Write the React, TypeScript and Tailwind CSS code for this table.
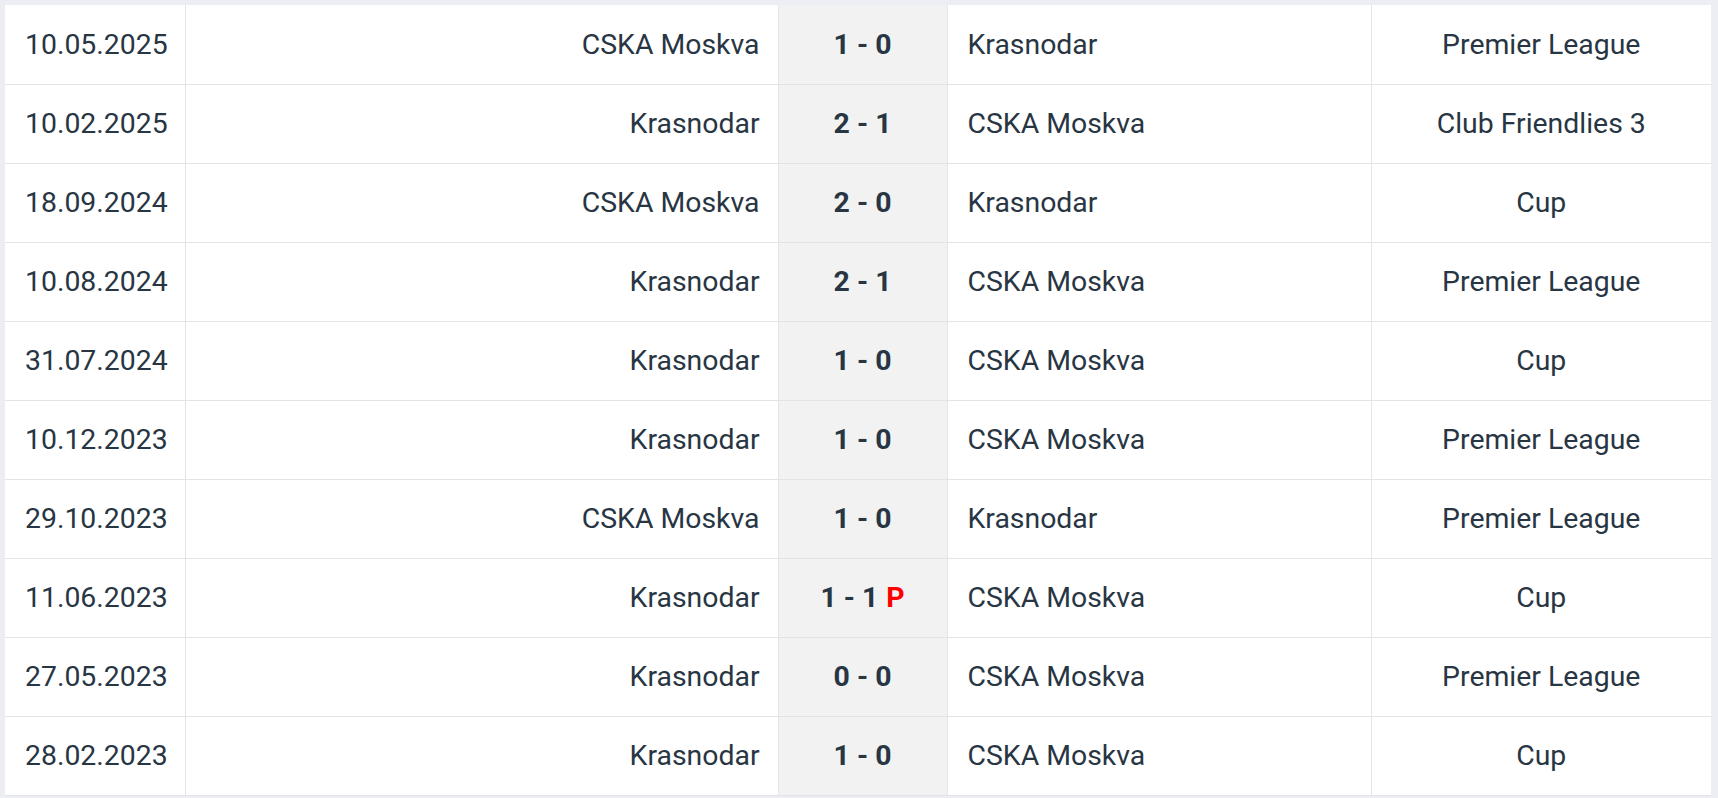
/* Head-to-head results table */

type Match = {
  date: string
  home: string
  score: string
  pen?: boolean
  away: string
  comp: string
}

const matches: Match[] = [
  { date: '10.05.2025', home: 'CSKA Moskva', score: '1 - 0', away: 'Krasnodar',   comp: 'Premier League' },
  { date: '10.02.2025', home: 'Krasnodar',   score: '2 - 1', away: 'CSKA Moskva', comp: 'Club Friendlies 3' },
  { date: '18.09.2024', home: 'CSKA Moskva', score: '2 - 0', away: 'Krasnodar',   comp: 'Cup' },
  { date: '10.08.2024', home: 'Krasnodar',   score: '2 - 1', away: 'CSKA Moskva', comp: 'Premier League' },
  { date: '31.07.2024', home: 'Krasnodar',   score: '1 - 0', away: 'CSKA Moskva', comp: 'Cup' },
  { date: '10.12.2023', home: 'Krasnodar',   score: '1 - 0', away: 'CSKA Moskva', comp: 'Premier League' },
  { date: '29.10.2023', home: 'CSKA Moskva', score: '1 - 0', away: 'Krasnodar',   comp: 'Premier League' },
  { date: '11.06.2023', home: 'Krasnodar',   score: '1 - 1', pen: true, away: 'CSKA Moskva', comp: 'Cup' },
  { date: '27.05.2023', home: 'Krasnodar',   score: '0 - 0', away: 'CSKA Moskva', comp: 'Premier League' },
  { date: '28.02.2023', home: 'Krasnodar',   score: '1 - 0', away: 'CSKA Moskva', comp: 'Cup' },
]

export default function App() {
  return (
    <div className="min-h-[798px] bg-[#eceef4] p-[5px] font-['Roboto','Liberation_Sans',sans-serif] text-[#283543]">
      <table className="w-[1706px] table-fixed border-collapse bg-white text-[28.4px] leading-none">
        <colgroup>
          <col className="w-[180px]" />
          <col className="w-[593px]" />
          <col className="w-[169px]" />
          <col className="w-[424px]" />
          <col className="w-[340px]" />
        </colgroup>
        <tbody>
          {matches.map((m, i) => (
            <tr key={i} className="h-[79px] border-b border-[#e4e4e8] [&>td]:pt-[2px]">
              <td className="border-r border-[#e4e4e8] pl-5">{m.date}</td>
              <td className="border-r border-[#e4e4e8] pr-[18px] text-right">{m.home}</td>
              <td className="border-r border-[#e4e4e8] bg-[#f2f2f2] text-center font-bold">
                {m.score}
                {m.pen && <span className="ml-2 text-[#f00]">P</span>}
              </td>
              <td className="border-r border-[#e4e4e8] pl-5">{m.away}</td>
              <td className="text-center">{m.comp}</td>
            </tr>
          ))}
        </tbody>
      </table>
    </div>
  )
}
